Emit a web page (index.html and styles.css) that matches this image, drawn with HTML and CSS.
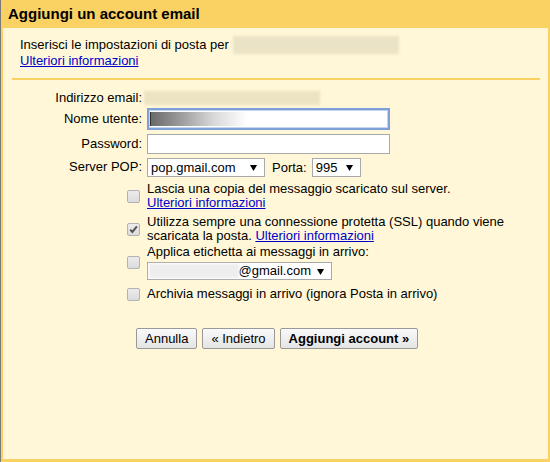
FILE: index.html
```html
<!DOCTYPE html>
<html lang="it">
<head>
<meta charset="utf-8">
<title>Aggiungi un account email</title>
<link rel="stylesheet" href="styles.css">
</head>
<body>
<div class="outer">
  <div class="window">
    <div class="titlebar"><h1 class="title">Aggiungi un account email</h1></div>
    <div class="content">
      <div class="intro">
        <div class="intro-line"><span>Inserisci le impostazioni di posta per</span><span class="blur blur-intro"></span></div>
        <a href="#" class="link">Ulteriori informazioni</a>
      </div>
      <div class="rule"></div>

      <div class="form">
        <div class="label">Indirizzo email:</div>
        <div class="field"><span class="blur blur-email"></span></div>

        <div class="label">Nome utente:</div>
        <div class="field"><div class="input input-focus"><span class="caret"></span><span class="user-blur"></span></div></div>

        <div class="label">Password:</div>
        <div class="field"><div class="input"></div></div>

        <div class="label">Server POP:</div>
        <div class="field field-row">
          <div class="select select-server"><span class="select-text">pop.gmail.com</span><svg class="arrow" width="7" height="6" viewBox="0 0 7 6"><path d="M0 0H7L3.5 6Z" fill="#000"/></svg></div>
          <span class="port-label">Porta:</span>
          <div class="select select-port"><span class="select-text">995</span><svg class="arrow" width="7" height="6" viewBox="0 0 7 6"><path d="M0 0H7L3.5 6Z" fill="#000"/></svg></div>
        </div>
      </div>

      <div class="options">
        <div class="option opt-1">
          <span class="checkbox"></span>
          <div class="option-text">Lascia una copia del messaggio scaricato sul server.<br><a href="#" class="link">Ulteriori informazioni</a></div>
        </div>
        <div class="option opt-2">
          <span class="checkbox"><svg width="11" height="11" viewBox="0 0 11 11"><path d="M2.2 5.6L4.4 8L8.9 2.4" fill="none" stroke="#555" stroke-width="2"/></svg></span>
          <div class="option-text">Utilizza sempre una connessione protetta (SSL) quando viene<br>scaricata la posta. <a href="#" class="link">Ulteriori informazioni</a></div>
        </div>
        <div class="option opt-3">
          <span class="checkbox"></span>
          <div class="option-text">Applica etichetta ai messaggi in arrivo:
            <div class="select select-label"><span class="blur blur-label"></span><span class="select-text">@gmail.com</span><svg class="arrow" width="7" height="6" viewBox="0 0 7 6"><path d="M0 0H7L3.5 6Z" fill="#000"/></svg></div>
          </div>
        </div>
        <div class="option opt-4">
          <span class="checkbox"></span>
          <div class="option-text">Archivia messaggi in arrivo (ignora Posta in arrivo)</div>
        </div>
      </div>

      <div class="buttons">
        <button class="btn" type="button">Annulla</button>
        <button class="btn" type="button">« Indietro</button>
        <button class="btn btn-primary" type="button">Aggiungi account »</button>
      </div>
    </div>
  </div>
</div>
</body>
</html>
```
FILE: styles.css
```css
html, body {
  margin: 0;
  padding: 0;
}
body {
  width: 550px;
  height: 462px;
  overflow: hidden;
  font-family: "Liberation Sans", Arial, sans-serif;
  font-size: 13px;
  line-height: 14px;
  color: #000;
  background: #fff7d7;
}
.outer {
  height: 462px;
  box-sizing: border-box;
  border-left: 1px solid #7a7a7a;
}
.window {
  height: 462px;
  box-sizing: border-box;
  background: #fff7d7;
  border-left: 2px solid #fad163;
  border-right: 2px solid #fad163;
  border-bottom: 3px solid #fad163;
  display: flex;
  flex-direction: column;
}
.titlebar {
  height: 28px;
  background: #fad163;
  padding-left: 5px;
}
.title {
  margin: 0;
  font-size: 15px;
  line-height: 28px;
  font-weight: bold;
  color: #000;
}
.content {
  display: flex;
  flex-direction: column;
}
.intro {
  padding: 8px 0 0 17px;
  color: #000;
}
.intro-line {
  display: flex;
  align-items: center;
}
.link {
  color: #0000cc;
  text-decoration: underline;
}
.blur {
  display: inline-block;
  background: #ece4c6;
  filter: blur(1.5px);
}
.blur-intro {
  width: 166px;
  height: 18px;
  margin-left: 4px;
  background: #ebe3c5;
}
.rule {
  height: 2px;
  background: #fad163;
  margin: 10px 8px 0 9px;
}
.form {
  display: grid;
  grid-template-columns: 139px auto;
  column-gap: 5px;
  row-gap: 3px;
  margin-top: 11px;
  align-items: center;
}
.label {
  text-align: right;
  color: #000;
}
.field {
  display: flex;
  align-items: center;
}
.blur-email {
  width: 176px;
  height: 14px;
  margin-left: -3px;
  background: #ece3c2;
}
.input {
  width: 243px;
  height: 20px;
  box-sizing: border-box;
  background: #fff;
  border: 1px solid #a9a9a9;
  margin-top: 1px;
}
.input-focus {
  height: 22px;
  margin-top: 0;
  border: 2px solid #7f9fd8;
  box-shadow: inset 0 0 0 1px #c5d5ef;
  display: flex;
  align-items: center;
  padding-left: 1px;
}
.caret {
  width: 1px;
  height: 14px;
  background: #333;
}
.user-blur {
  width: 96px;
  height: 14px;
  background: linear-gradient(to right, #6a6a6a, #9a9a9a 30%, #d8d8d8 65%, #ffffff);
  filter: blur(0.6px);
}
.field-row {
  margin-top: 1px;
}
.select {
  position: relative;
  box-sizing: border-box;
  height: 19px;
  background: #fff;
  border: 1px solid #a9a9a9;
  display: flex;
  align-items: center;
  padding-left: 3px;
  font-size: 13px;
  color: #000;
}
.select-text {
  line-height: 16px;
}
.arrow {
  position: absolute;
  right: 7px;
  top: 6px;
}
.select-server {
  width: 118px;
}
.port-label {
  margin-left: 7px;
  margin-right: 5px;
  color: #000;
}
.select-port {
  width: 49px;
}
.options {
  display: flex;
  flex-direction: column;
  padding-left: 124px;
  margin-top: 5px;
}
.option {
  display: flex;
  align-items: center;
}
.opt-2 {
  margin-top: 5px;
}
.opt-3 {
  margin-top: 2px;
}
.opt-4 {
  margin-top: 7px;
}
.checkbox {
  width: 11px;
  height: 11px;
  flex: none;
  border: 1px solid #b3b3b3;
  border-radius: 2px;
  background: linear-gradient(#ececec, #dcdcdc);
  margin-right: 7px;
  display: flex;
  align-items: center;
  justify-content: center;
}
.option-text {
  color: #000;
}
.select-label {
  width: 185px;
  height: 18px;
  margin-top: 3px;
  padding-left: 1px;
  padding-right: 20px;
  justify-content: space-between;
}
.blur-label {
  width: 90px;
  height: 14px;
  background: #eeeeee;
  filter: blur(1px);
}
.buttons {
  display: flex;
  gap: 5px;
  padding-left: 133px;
  margin-top: 27px;
}
.btn {
  font-family: "Liberation Sans", Arial, sans-serif;
  font-size: 13px;
  height: 21px;
  line-height: 17px;
  padding: 0 8px;
  background: linear-gradient(#fafafa, #e4e4e4);
  border: 1px solid #999;
  border-radius: 2px;
  color: #000;
}
.btn-primary {
  font-weight: bold;
}
```
